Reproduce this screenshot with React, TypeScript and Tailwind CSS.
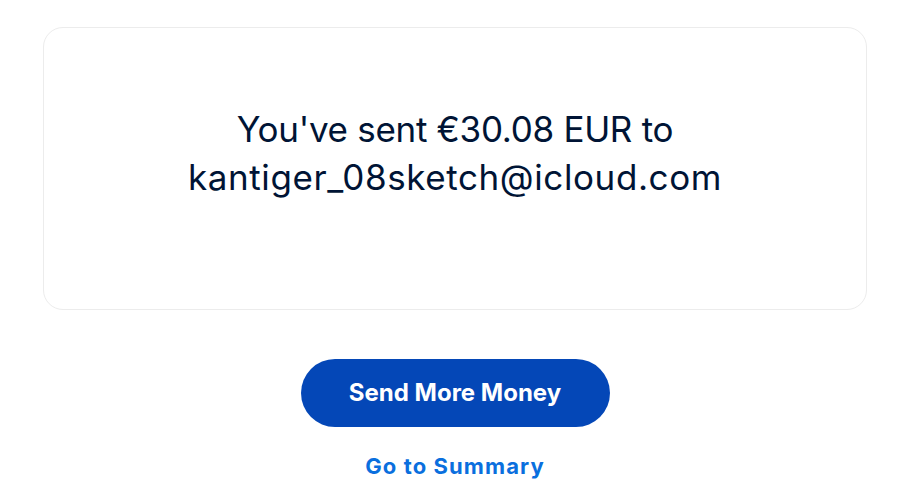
import React from 'react';

export default function App() {
  return (
    <div className="min-h-[504px] bg-white font-['Inter',sans-serif]">
      <div className="pl-[43px] pr-[35px] pt-[27px]">
        <div className="flex h-[283px] items-center justify-center rounded-[20px] border border-[#ececec] bg-white pb-[32px]">
          <h1 className="text-center text-[35px] font-normal leading-[48px] text-[#001435]">
            <span className="block tracking-[-0.3px]">You've sent €30.08 EUR to</span>
            <span className="block tracking-[0.6px]">kantiger_08sketch@icloud.com</span>
          </h1>
        </div>

        <div className="mt-[49px] flex flex-col items-center">
          <button className="flex h-[68px] w-[309px] items-center justify-center rounded-full bg-[#0447b7] text-[24px] font-bold text-white">
            Send More Money
          </button>
          <a href="#" className="mt-[25px] text-[22px] font-bold leading-[28px] tracking-[1.1px] text-[#0a6fde]">
            Go to Summary
          </a>
        </div>
      </div>
    </div>
  );
}
